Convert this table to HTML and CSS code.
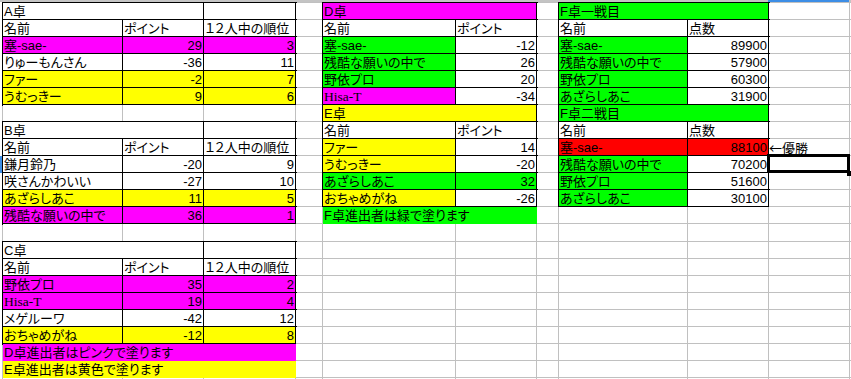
FILE: index.html
```html
<!DOCTYPE html>
<html lang="ja">
<head>
<meta charset="utf-8">
<title>卓集計</title>
<link rel="stylesheet" href="styles.css">
</head>
<body>
<div class="app">
  <div class="colhead"><div class="hd"></div><div class="hd"></div><div class="hd"></div><div class="hd"></div><div class="hd"></div><div class="hd"></div><div class="hd"></div><div class="hd"></div><div class="hd"></div><div class="hd on"></div><div class="hd"></div></div>
  <div class="main">
    <div class="rowhead"><div class="rsel"></div></div>
    <div class="sheet">
      <!-- row 1 -->
      <div class="c b s2">A卓</div><div class="c b"></div><div class="c"></div>
      <div class="c b pk s2">D卓</div><div class="c"></div>
      <div class="c b gr s2">F卓一戦目</div><div class="c"></div><div class="c"></div>
      <!-- row 2 -->
      <div class="c b">名前</div><div class="c b">ポイント</div><div class="c b">１２人中の順位</div><div class="c"></div>
      <div class="c b">名前</div><div class="c b">ポイント</div><div class="c"></div>
      <div class="c b">名前</div><div class="c b">点数</div><div class="c"></div><div class="c"></div>
      <!-- row 3 -->
      <div class="c b pk">塞-sae-</div><div class="c b pk n">29</div><div class="c b pk n">3</div><div class="c"></div>
      <div class="c b gr">塞-sae-</div><div class="c b n">-12</div><div class="c"></div>
      <div class="c b gr">塞-sae-</div><div class="c b n">89900</div><div class="c"></div><div class="c"></div>
      <!-- row 4 -->
      <div class="c b">りゅーもんさん</div><div class="c b n">-36</div><div class="c b n">11</div><div class="c"></div>
      <div class="c b gr">残酷な願いの中で</div><div class="c b n">26</div><div class="c"></div>
      <div class="c b gr">残酷な願いの中で</div><div class="c b n">57900</div><div class="c"></div><div class="c"></div>
      <!-- row 5 -->
      <div class="c b yl">ファー</div><div class="c b yl n">-2</div><div class="c b yl n">7</div><div class="c"></div>
      <div class="c b gr">野依プロ</div><div class="c b n">20</div><div class="c"></div>
      <div class="c b gr">野依プロ</div><div class="c b n">60300</div><div class="c"></div><div class="c"></div>
      <!-- row 6 -->
      <div class="c b yl">うむっきー</div><div class="c b yl n">9</div><div class="c b yl n">6</div><div class="c"></div>
      <div class="c b pk hs">Hisa-T</div><div class="c b n">-34</div><div class="c"></div>
      <div class="c b gr">あざらしあこ</div><div class="c b n">31900</div><div class="c"></div><div class="c"></div>
      <!-- row 7 -->
      <div class="c"></div><div class="c"></div><div class="c"></div><div class="c"></div>
      <div class="c b yl s2">E卓</div><div class="c"></div>
      <div class="c b gr s2">F卓二戦目</div><div class="c"></div><div class="c"></div>
      <!-- row 8 -->
      <div class="c b s2">B卓</div><div class="c b"></div><div class="c"></div>
      <div class="c b">名前</div><div class="c b">ポイント</div><div class="c"></div>
      <div class="c b">名前</div><div class="c b">点数</div><div class="c"></div><div class="c"></div>
      <!-- row 9 -->
      <div class="c b">名前</div><div class="c b">ポイント</div><div class="c b">１２人中の順位</div><div class="c"></div>
      <div class="c b yl">ファー</div><div class="c b n">14</div><div class="c"></div>
      <div class="c b rd">塞-sae-</div><div class="c b rd n">88100</div><div class="c ja">←優勝</div><div class="c"></div>
      <!-- row 10 -->
      <div class="c b">鎌月鈴乃</div><div class="c b n">-20</div><div class="c b n">9</div><div class="c"></div>
      <div class="c b yl">うむっきー</div><div class="c b n">-20</div><div class="c"></div>
      <div class="c b gr">残酷な願いの中で</div><div class="c b n">70200</div><div class="c sel"></div><div class="c"></div>
      <!-- row 11 -->
      <div class="c b">咲さんかわいい</div><div class="c b n">-27</div><div class="c b n">10</div><div class="c"></div>
      <div class="c b gr">あざらしあこ</div><div class="c b gr n">32</div><div class="c"></div>
      <div class="c b gr">野依プロ</div><div class="c b n">51600</div><div class="c"></div><div class="c"></div>
      <!-- row 12 -->
      <div class="c b yl">あざらしあこ</div><div class="c b yl n">11</div><div class="c b yl n">5</div><div class="c"></div>
      <div class="c b yl">おちゃめがね</div><div class="c b n">-26</div><div class="c"></div>
      <div class="c b gr">あざらしあこ</div><div class="c b n">30100</div><div class="c"></div><div class="c"></div>
      <!-- row 13 -->
      <div class="c b pk">残酷な願いの中で</div><div class="c b pk n">36</div><div class="c b pk n">1</div><div class="c"></div>
      <div class="c gr s2">F卓進出者は緑で塗ります</div><div class="c"></div>
      <div class="c"></div><div class="c"></div><div class="c"></div><div class="c"></div>
      <!-- row 14 -->
      <div class="c"></div><div class="c"></div><div class="c"></div><div class="c"></div><div class="c"></div><div class="c"></div><div class="c"></div><div class="c"></div><div class="c"></div><div class="c"></div><div class="c"></div>
      <!-- row 15 -->
      <div class="c b s2">C卓</div><div class="c b"></div>
      <div class="c"></div><div class="c"></div><div class="c"></div><div class="c"></div><div class="c"></div><div class="c"></div><div class="c"></div><div class="c"></div>
      <!-- row 16 -->
      <div class="c b">名前</div><div class="c b">ポイント</div><div class="c b">１２人中の順位</div>
      <div class="c"></div><div class="c"></div><div class="c"></div><div class="c"></div><div class="c"></div><div class="c"></div><div class="c"></div><div class="c"></div>
      <!-- row 17 -->
      <div class="c b pk">野依プロ</div><div class="c b pk n">35</div><div class="c b pk n">2</div>
      <div class="c"></div><div class="c"></div><div class="c"></div><div class="c"></div><div class="c"></div><div class="c"></div><div class="c"></div><div class="c"></div>
      <!-- row 18 -->
      <div class="c b pk hs">Hisa-T</div><div class="c b pk n">19</div><div class="c b pk n">4</div>
      <div class="c"></div><div class="c"></div><div class="c"></div><div class="c"></div><div class="c"></div><div class="c"></div><div class="c"></div><div class="c"></div>
      <!-- row 19 -->
      <div class="c b">メゲルーワ</div><div class="c b n">-42</div><div class="c b n">12</div>
      <div class="c"></div><div class="c"></div><div class="c"></div><div class="c"></div><div class="c"></div><div class="c"></div><div class="c"></div><div class="c"></div>
      <!-- row 20 -->
      <div class="c b yl">おちゃめがね</div><div class="c b yl n">-12</div><div class="c b yl n">8</div>
      <div class="c"></div><div class="c"></div><div class="c"></div><div class="c"></div><div class="c"></div><div class="c"></div><div class="c"></div><div class="c"></div>
      <!-- row 21 -->
      <div class="c pk s3">D卓進出者はピンクで塗ります</div>
      <div class="c"></div><div class="c"></div><div class="c"></div><div class="c"></div><div class="c"></div><div class="c"></div><div class="c"></div><div class="c"></div>
      <!-- row 22 -->
      <div class="c yl s3">E卓進出者は黄色で塗ります</div>
      <div class="c"></div><div class="c"></div><div class="c"></div><div class="c"></div><div class="c"></div><div class="c"></div><div class="c"></div><div class="c"></div>
      <!-- row 23 -->
      <div class="c"></div><div class="c"></div><div class="c"></div><div class="c"></div><div class="c"></div><div class="c"></div><div class="c"></div><div class="c"></div><div class="c"></div><div class="c"></div><div class="c"></div>
    </div>
  </div>
</div>
</body>
</html>
```
FILE: styles.css
```css
* { box-sizing: border-box; }
html, body { margin: 0; padding: 0; background: #fff; overflow: hidden; }
body {
  font-family: "Liberation Sans", "Noto Sans CJK JP", sans-serif;
  font-size: 13px;
  color: #000;
  font-feature-settings: "palt";
}
.app { width: 851px; height: 379px; overflow: hidden; }

.colhead {
  display: grid;
  grid-template-columns: 122px 81px 92px 27px 133px 81px 22px 129px 81px 81px 81px;
  height: 2px;
  background: #c4c4c4;
}
.colhead .on { background: #3d8ee6; }

.main { display: flex; }
.rowhead {
  flex: 0 0 2px;
  display: grid;
  grid-template-rows: repeat(13, 17px) 18px repeat(9, 17px);
  padding-top: 1px;
}
.rsel { grid-row: 10; background: #3d8ee6; }

.sheet {
  display: grid;
  grid-template-columns: 120px 81px 92px 27px 133px 81px 22px 129px 81px 81px 81px;
  grid-template-rows: repeat(13, 17px) 18px repeat(9, 17px);
  border-top: 1px solid #c0c0c0;
  border-left: 1px solid #c0c0c0;
}

.c {
  border-right: 1px solid #c0c0c0;
  border-bottom: 1px solid #c0c0c0;
  background: #fff;
  white-space: nowrap;
  line-height: 17px;
  padding: 0 1px;
}
.pk { background: #ff00ff; border-color: #ff00ff; }
.yl { background: #ffff00; border-color: #ffff00; }
.gr { background: #00ff00; border-color: #00ff00; }
.rd { background: #ff0000; border-color: #ff0000; }
.b { border-color: #000; box-shadow: 0 0 0 1px #000; }
.n { text-align: right; }
.s2 { grid-column: span 2; }
.s3 { grid-column: span 3; }
.hs { font-family: "Liberation Serif", "Noto Sans CJK JP", serif; font-size: 13.5px; }
.ja { font-family: "Noto Sans CJK JP", sans-serif; padding-left: 0; }

.sel { position: relative; }
.sel::after {
  content: "";
  position: absolute;
  left: -2px; top: -2px; right: -1px; bottom: -1px;
  border: 3px solid #000;
}
.sel::before {
  content: "";
  position: absolute;
  right: -3px; bottom: -4px;
  width: 5px; height: 5px;
  background: #000;
  z-index: 1;
}
```
